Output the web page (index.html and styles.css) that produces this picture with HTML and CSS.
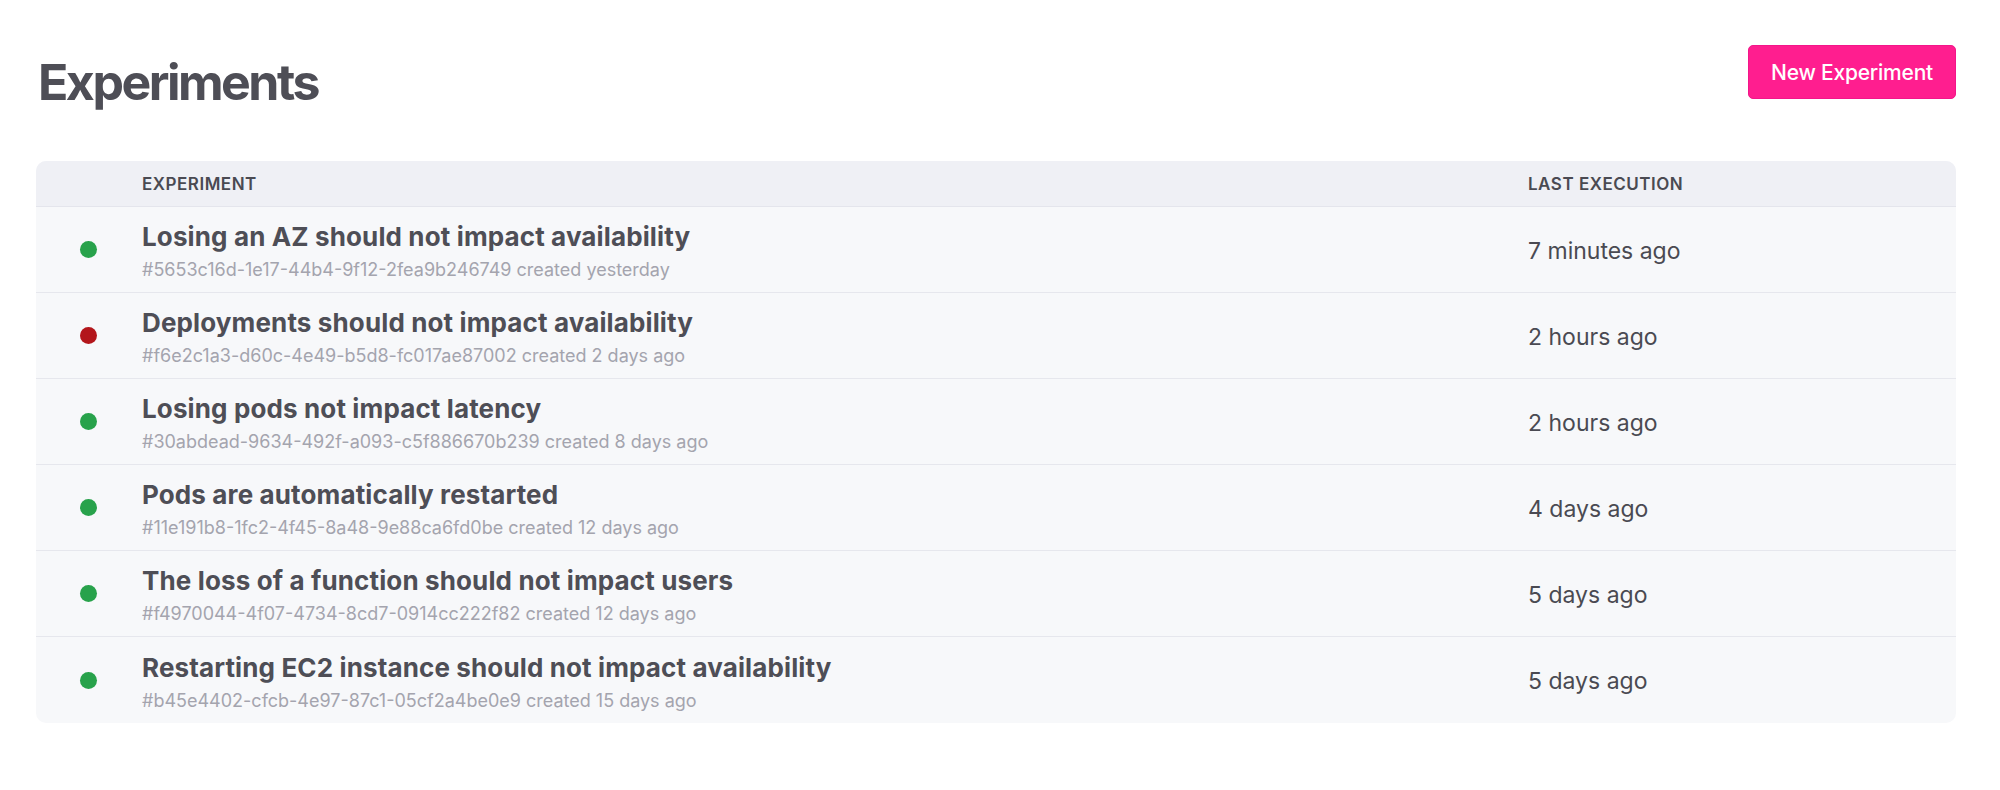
FILE: index.html
```html
<!DOCTYPE html>
<html lang="en">
<head>
<meta charset="utf-8">
<title>Experiments</title>
<link rel="stylesheet" href="styles.css">
</head>
<body>
<main class="page">
  <header class="page-header">
    <h1 class="page-title">Experiments</h1>
    <button class="btn-primary" type="button">New Experiment</button>
  </header>

  <section class="table">
    <div class="table-head">
      <div class="cell-status"></div>
      <div class="th">Experiment</div>
      <div class="th">Last Execution</div>
    </div>

    <div class="row">
      <div class="cell-status"><span class="dot dot-ok"></span></div>
      <div class="cell-main">
        <div class="exp-title">Losing an AZ should not impact availability</div>
        <div class="exp-meta">#5653c16d-1e17-44b4-9f12-2fea9b246749 created yesterday</div>
      </div>
      <div class="cell-time">7 minutes ago</div>
    </div>

    <div class="row">
      <div class="cell-status"><span class="dot dot-fail"></span></div>
      <div class="cell-main">
        <div class="exp-title">Deployments should not impact availability</div>
        <div class="exp-meta">#f6e2c1a3-d60c-4e49-b5d8-fc017ae87002 created 2 days ago</div>
      </div>
      <div class="cell-time">2 hours ago</div>
    </div>

    <div class="row">
      <div class="cell-status"><span class="dot dot-ok"></span></div>
      <div class="cell-main">
        <div class="exp-title">Losing pods not impact latency</div>
        <div class="exp-meta">#30abdead-9634-492f-a093-c5f886670b239 created 8 days ago</div>
      </div>
      <div class="cell-time">2 hours ago</div>
    </div>

    <div class="row">
      <div class="cell-status"><span class="dot dot-ok"></span></div>
      <div class="cell-main">
        <div class="exp-title">Pods are automatically restarted</div>
        <div class="exp-meta">#11e191b8-1fc2-4f45-8a48-9e88ca6fd0be created 12 days ago</div>
      </div>
      <div class="cell-time">4 days ago</div>
    </div>

    <div class="row">
      <div class="cell-status"><span class="dot dot-ok"></span></div>
      <div class="cell-main">
        <div class="exp-title">The loss of a function should not impact users</div>
        <div class="exp-meta">#f4970044-4f07-4734-8cd7-0914cc222f82 created 12 days ago</div>
      </div>
      <div class="cell-time">5 days ago</div>
    </div>

    <div class="row">
      <div class="cell-status"><span class="dot dot-ok"></span></div>
      <div class="cell-main">
        <div class="exp-title">Restarting EC2 instance should not impact availability</div>
        <div class="exp-meta">#b45e4402-cfcb-4e97-87c1-05cf2a4be0e9 created 15 days ago</div>
      </div>
      <div class="cell-time">5 days ago</div>
    </div>
  </section>
</main>
</body>
</html>
```

FILE: styles.css
```css
* { box-sizing: border-box; }

html, body {
  margin: 0;
  padding: 0;
  background: #ffffff;
}

body {
  font-family: Inter, "Noto Sans", "Liberation Sans", sans-serif;
  color: #4d4d55;
}

.page {
  padding: 45px 44px 40px 36px;
}

.page-header {
  display: flex;
  justify-content: space-between;
  align-items: flex-start;
}

.page-title {
  margin: 4px 0 0 2px;
  font-size: 50px;
  line-height: 66px;
  font-weight: 700;
  letter-spacing: -0.05em;
  color: #4e4e56;
}

.btn-primary {
  width: 208px;
  height: 54px;
  border: 1px solid #f3168a;
  border-radius: 5px;
  background: #ff1e8f;
  color: #ffffff;
  font-family: inherit;
  font-size: 21px;
  font-weight: 500;
  letter-spacing: -0.01em;
  cursor: pointer;
}

.table {
  margin-top: 46px;
  border-radius: 10px;
  overflow: hidden;
  background: #f7f8fa;
}

.table-head,
.row {
  display: grid;
  grid-template-columns: 106px 1386px 1fr;
  align-items: center;
}

.table-head {
  height: 46px;
  background: #eff0f5;
  border-bottom: 1px solid #e4e5ec;
}

.th {
  font-size: 17px;
  font-weight: 600;
  letter-spacing: 0.03em;
  text-transform: uppercase;
  color: #4a4a52;
}

.row {
  height: 86px;
  border-bottom: 1px solid #e6e7ed;
}

.row:last-child {
  border-bottom: none;
}

.cell-status {
  display: flex;
  justify-content: flex-start;
  padding-left: 44px;
}

.dot {
  display: block;
  width: 17px;
  height: 17px;
  border-radius: 50%;
}

.dot-ok { background: #28a24b; }
.dot-fail { background: #b3161b; }

.cell-main {
  display: flex;
  flex-direction: column;
  padding-top: 4px;
}

.exp-title {
  font-size: 26px;
  line-height: 34px;
  font-weight: 700;
  letter-spacing: 0.005em;
  color: #4e4e56;
}

.exp-meta {
  margin-top: 3px;
  font-size: 18px;
  line-height: 26px;
  font-weight: 400;
  color: #a4a4ae;
}

.cell-time {
  font-size: 23px;
  font-weight: 400;
  color: #4a4a52;
  padding-top: 2px;
}
```
